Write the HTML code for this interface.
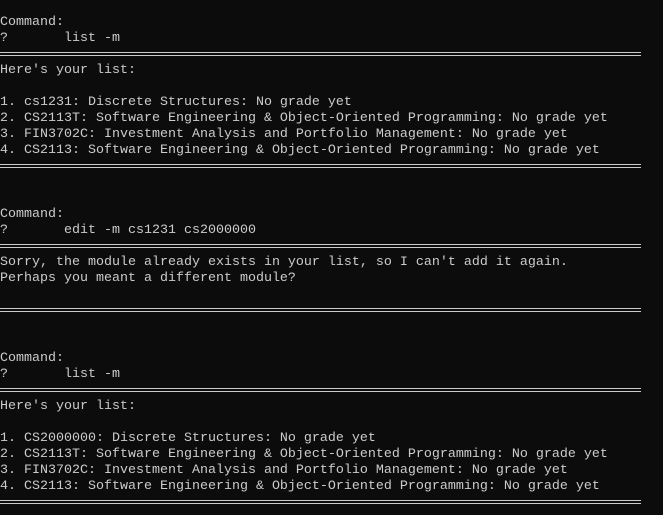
<!DOCTYPE html>
<html><head><meta charset="utf-8"><style>
html,body{margin:0;padding:0;background:#0c0c0c;width:663px;height:515px;overflow:hidden}
.t{position:absolute;left:0;top:12px;font-family:"Liberation Mono",monospace;font-size:13.33px;color:#cccccc;white-space:pre}
.r{height:16px;line-height:16px;position:relative;top:3px}
.d{height:16px;position:relative}
.d::before{content:"";position:absolute;left:0;top:8px;width:641px;height:1px;background:#cccccc}
.d::after{content:"";position:absolute;left:0;top:11px;width:641px;height:1px;background:#cccccc}
</style></head><body><div class="t"><div class="r">Command:</div><div class="r">?       list -m</div><div class="d"></div><div class="r">Here's your list:</div><div class="r"> </div><div class="r">1. cs1231: Discrete Structures: No grade yet</div><div class="r">2. CS2113T: Software Engineering &amp; Object-Oriented Programming: No grade yet</div><div class="r">3. FIN3702C: Investment Analysis and Portfolio Management: No grade yet</div><div class="r">4. CS2113: Software Engineering &amp; Object-Oriented Programming: No grade yet</div><div class="d"></div><div class="r"> </div><div class="r"> </div><div class="r">Command:</div><div class="r">?       edit -m cs1231 cs2000000</div><div class="d"></div><div class="r">Sorry, the module already exists in your list, so I can't add it again.</div><div class="r">Perhaps you meant a different module?</div><div class="r"> </div><div class="d"></div><div class="r"> </div><div class="r"> </div><div class="r">Command:</div><div class="r">?       list -m</div><div class="d"></div><div class="r">Here's your list:</div><div class="r"> </div><div class="r">1. CS2000000: Discrete Structures: No grade yet</div><div class="r">2. CS2113T: Software Engineering &amp; Object-Oriented Programming: No grade yet</div><div class="r">3. FIN3702C: Investment Analysis and Portfolio Management: No grade yet</div><div class="r">4. CS2113: Software Engineering &amp; Object-Oriented Programming: No grade yet</div><div class="d"></div></div></body></html>
